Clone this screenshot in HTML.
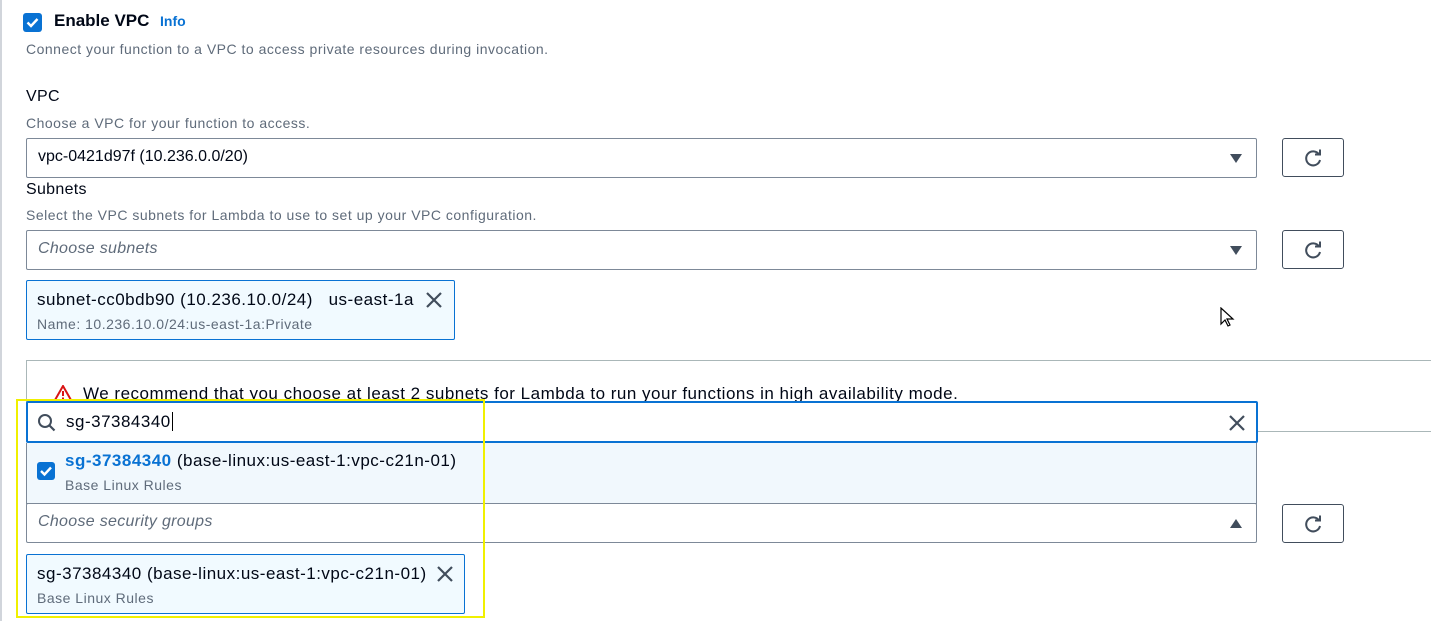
<!DOCTYPE html>
<html><head><style>
*{box-sizing:border-box;margin:0;padding:0}
body{width:1431px;height:621px;background:#fff;position:relative;overflow:hidden;font-family:"Liberation Sans",sans-serif;color:#000716}
.a{position:absolute;white-space:nowrap}
.lbl{font-size:16px;letter-spacing:0.3px}
.desc{font-size:14px;letter-spacing:0.5px;color:#5f6b7a}
.w{font-size:17px;letter-spacing:0.5px}
.sel{position:absolute;left:26px;width:1231px;height:40px;border:1px solid #7d8998;border-radius:2px;background:#fff}
.sel span{position:absolute;left:11px;top:9px;font-size:16px}
.ph{font-style:italic;color:#5f6b7a;letter-spacing:0.3px}
.tri{position:absolute;right:14px;top:15px;width:0;height:0;border-left:6px solid transparent;border-right:6px solid transparent;border-top:9px solid #414d5c}
.tri.up{border-top:none;border-bottom:9px solid #414d5c}
.btn{position:absolute;left:1282px;width:62px;height:39px;border:1px solid #414d5c;border-radius:3px;background:#fff}
.btn svg{position:absolute;left:20px;top:9px}
.tok{position:absolute;left:26px;height:60px;border:1px solid #0972d3;border-radius:2px;background:#f1faff}
</style></head><body>
<div class="a" style="left:0;top:0;width:2px;height:621px;background:#d1d5db"></div>
<div class="a" style="left:23px;top:13px;width:19px;height:19px;background:#0972d3;border-radius:3px"><svg width="19" height="19"><path d="M4.5 9.5l3.5 3.5 6.5-7" stroke="#fff" stroke-width="2.4" fill="none"/></svg></div>
<div class="a" style="left:54px;top:11px;font-size:17px;font-weight:bold">Enable VPC</div>
<div class="a" style="left:160px;top:13px;font-size:14px;font-weight:bold;color:#0972d3">Info</div>
<div class="a desc" style="left:26px;top:41px">Connect your function to a VPC to access private resources during invocation.</div>
<div class="a lbl" style="left:26px;top:88px">VPC</div>
<div class="a desc" style="left:26px;top:115px">Choose a VPC for your function to access.</div>
<div class="sel" style="top:138px"><span>vpc-0421d97f (10.236.0.0/20)</span><div class="tri"></div></div>
<div class="btn" style="top:138px"><svg width="22" height="20" viewBox="0 0 22 20"><path d="M16 6.5A7 7 0 1 0 17 12" stroke="#414d5c" stroke-width="2" fill="none"/><path d="M12 6.5h5v-5" stroke="#414d5c" stroke-width="2" fill="none"/></svg></div>
<div class="a lbl" style="left:26px;top:181px">Subnets</div>
<div class="a desc" style="left:26px;top:207px">Select the VPC subnets for Lambda to use to set up your VPC configuration.</div>
<div class="sel" style="top:230px"><span class="ph">Choose subnets</span><div class="tri"></div></div>
<div class="btn" style="top:230px"><svg width="22" height="20" viewBox="0 0 22 20"><path d="M16 6.5A7 7 0 1 0 17 12" stroke="#414d5c" stroke-width="2" fill="none"/><path d="M12 6.5h5v-5" stroke="#414d5c" stroke-width="2" fill="none"/></svg></div>
<div class="tok" style="top:280px;width:429px"><div class="a w" style="left:10px;top:9px">subnet-cc0bdb90 (10.236.10.0/24) &nbsp; us-east-1a</div><div class="a desc" style="left:10px;top:35px">Name: 10.236.10.0/24:us-east-1a:Private</div><svg class="a" style="left:398px;top:10px" width="18" height="18"><path d="M2 2l14 14M16 2L2 16" stroke="#414d5c" stroke-width="2.2"/></svg></div>
<div class="a" style="left:26px;top:360px;width:1410px;height:72px;border:1px solid #aab7b8;border-right:none"></div>
<svg class="a" style="left:54px;top:385px" width="18" height="16"><path d="M9 1L1 15h16z" fill="none" stroke="#d91515" stroke-width="2"/><path d="M9 6v5M9 12.5v1.5" stroke="#d91515" stroke-width="2"/></svg>
<div class="a w" style="left:83px;top:384px">We recommend that you choose at least 2 subnets for Lambda to run your functions in high availability mode.</div>
<div class="a" style="left:26px;top:401px;width:1232px;height:42px;border:2px solid #0972d3;background:#fff;border-radius:2px"><svg class="a" style="left:9px;top:10px" width="20" height="20"><circle cx="8" cy="8" r="6" stroke="#414d5c" stroke-width="2" fill="none"/><path d="M12.5 12.5l5 5" stroke="#414d5c" stroke-width="2.2"/></svg><div class="a w" style="left:38px;top:9px">sg-37384340<span style="border-left:1px solid #000;margin-left:1px"></span></div><svg class="a" style="left:1200px;top:11px" width="18" height="18"><path d="M2 2l14 14M16 2L2 16" stroke="#414d5c" stroke-width="2.2"/></svg></div>
<div class="a" style="left:26px;top:443px;width:1231px;height:61px;background:#f1f8fd;border:1px solid #7d8998;border-top:none"><div class="a" style="left:10px;top:19px;width:18px;height:18px;background:#0972d3;border-radius:3px"><svg width="18" height="18"><path d="M4 9l3.5 3.5 6.5-7" stroke="#fff" stroke-width="2.4" fill="none"/></svg></div><div class="a w" style="left:38px;top:8px"><b style="color:#0972d3">sg-37384340</b> (base-linux:us-east-1:vpc-c21n-01)</div><div class="a desc" style="left:38px;top:34px">Base Linux Rules</div></div>
<div class="sel" style="top:503px"><span class="ph">Choose security groups</span><div class="tri up"></div></div>
<div class="btn" style="top:504px"><svg width="22" height="20" viewBox="0 0 22 20"><path d="M16 6.5A7 7 0 1 0 17 12" stroke="#414d5c" stroke-width="2" fill="none"/><path d="M12 6.5h5v-5" stroke="#414d5c" stroke-width="2" fill="none"/></svg></div>
<div class="tok" style="top:554px;width:439px"><div class="a w" style="left:10px;top:9px">sg-37384340 (base-linux:us-east-1:vpc-c21n-01)</div><div class="a desc" style="left:10px;top:35px">Base Linux Rules</div><svg class="a" style="left:409px;top:10px" width="18" height="18"><path d="M2 2l14 14M16 2L2 16" stroke="#414d5c" stroke-width="2.2"/></svg></div>
<div class="a" style="left:16px;top:399px;width:469px;height:219px;border:2px solid #f0f000"></div>
<svg class="a" style="left:1220px;top:307px" width="16" height="22"><path d="M1 1v16l4-4 3 6 2-1-3-6h6z" fill="#fff" stroke="#000" stroke-width="1.2"/></svg>
</body></html>
